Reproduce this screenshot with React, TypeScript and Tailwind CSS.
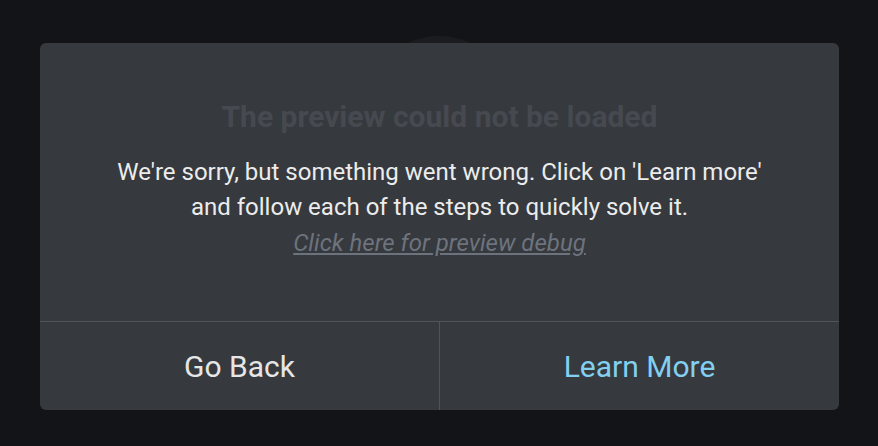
const App = () => {
  return (
    <div
      className="relative w-[878px] h-[446px] overflow-hidden bg-[#131417]"
      style={{ fontFamily: 'Roboto, "Liberation Sans", sans-serif' }}
    >
      {/* Page behind the dialog */}
      <div className="flex flex-col items-center pt-[36px]">
        <div className="w-[150px] h-[150px] rounded-full bg-[#1b1c1f]" />
        <p className="mt-[200px] text-[22px] font-medium tracking-[0.5em] text-[#2a2c30]">
          LOADING
        </p>
      </div>

      {/* Dialog */}
      <div className="absolute left-[40px] top-[43px] w-[799px] h-[367px] rounded-[6px] bg-[#36393e] flex flex-col overflow-hidden">
        <div className="h-[278px] pb-[2px] flex flex-col items-center justify-center text-center">
          <h2 className="text-[30px] leading-[32px] font-bold text-[#464a50]">
            The preview could not be loaded
          </h2>
          <p className="mt-[22px] text-[24px] leading-[35px] text-[#ececec]">
            We're sorry, but something went wrong. Click on 'Learn more'
            <br />
            and follow each of the steps to quickly solve it.
          </p>
          <a className="text-[24px] leading-[36px] italic underline text-[#6d737c]">
            Click here for preview debug
          </a>
        </div>
        <div className="flex-1 flex border-t border-[#505358]">
          <button className="flex-1 flex items-center justify-center text-[30px] text-[#e6e6e6]">
            Go Back
          </button>
          <button className="flex-1 flex items-center justify-center text-[30px] text-[#82d0f0] border-l border-[#505358]">
            Learn More
          </button>
        </div>
      </div>
    </div>
  )
}

export default App
